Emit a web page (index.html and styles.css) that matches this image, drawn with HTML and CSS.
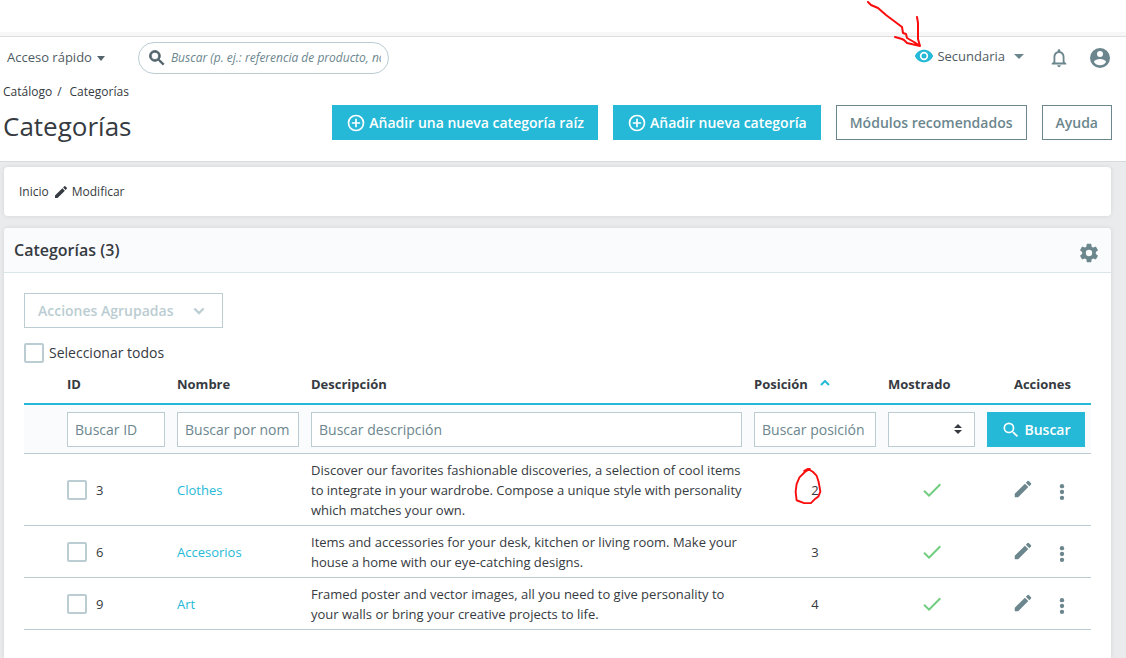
FILE: index.html
```html
<!DOCTYPE html>
<html lang="es">
<head>
<meta charset="utf-8">
<meta name="viewport" content="width=device-width, initial-scale=1">
<title>Categorías</title>
<link rel="stylesheet" href="styles.css">
</head>
<body>
<svg class="symbols" aria-hidden="true">
  <symbol id="i-search" viewBox="0 0 24 24"><path d="M15.5 14h-.79l-.28-.27A6.47 6.47 0 0 0 16 9.5 6.5 6.5 0 1 0 9.5 16c1.61 0 3.09-.59 4.23-1.57l.27.28v.79l5 4.99L20.49 19l-4.99-5zm-6 0a4.5 4.5 0 1 1 0-9 4.5 4.5 0 0 1 0 9z"/></symbol>
  <symbol id="i-add" viewBox="0 0 24 24"><path d="M13 7h-2v4H7v2h4v4h2v-4h4v-2h-4V7zm-1-5a10 10 0 1 0 0 20 10 10 0 0 0 0-20zm0 18a8 8 0 1 1 0-16 8 8 0 0 1 0 16z"/></symbol>
  <symbol id="i-edit" viewBox="0 0 24 24"><path d="M3 17.25V21h3.75L17.81 9.94l-3.75-3.75L3 17.25zM20.71 7.04a1 1 0 0 0 0-1.41l-2.34-2.34a1 1 0 0 0-1.41 0l-1.83 1.83 3.75 3.75 1.83-1.83z"/></symbol>
  <symbol id="i-check" viewBox="0 0 24 24"><path d="M9 16.17 4.83 12l-1.42 1.41L9 19 21 7l-1.41-1.41z"/></symbol>
  <symbol id="i-more" viewBox="0 0 24 24"><circle cx="12" cy="5" r="2.6"/><circle cx="12" cy="12" r="2.6"/><circle cx="12" cy="19" r="2.6"/></symbol>
  <symbol id="i-down" viewBox="0 0 24 24"><path d="M7.41 8.59 12 13.17l4.59-4.58L18 10l-6 6-6-6z"/></symbol>
</svg>

<div class="topstrip"></div>
<header class="header">
  <div class="bar">
    <button class="quick" type="button">Acceso rápido<span class="caret"></span></button>
    <form class="search">
      <svg class="search-icon" aria-hidden="true"><use href="#i-search"/></svg>
      <input class="search-input" type="text" aria-label="Buscar" placeholder="Buscar (p. ej.: referencia de producto, nombre de cliente)">
    </form>
    <div class="tools">
      <a class="shop" href="#">
        <svg class="eye" viewBox="0 0 24 24" aria-hidden="true"><path d="M12 4.500C7 4.500 2.730 7.610 1 12c1.730 4.390 6 7.500 11 7.500s9.270-3.110 11-7.500c-1.730-4.390-6-7.500-11-7.500zM12 17a5 5 0 1 1 0-10 5 5 0 0 1 0 10zm0-8a3 3 0 1 0 0 6 3 3 0 0 0 0-6z"/></svg>
        Secundaria<span class="caret caret-wide"></span>
        <svg class="arrow" viewBox="0 0 56 48" aria-hidden="true"><path d="M2 1l3 3 7 3 8 7 16 12 1 6 3 1 1 4 7 4 6 4M29 36l7 2 2 1 3 3 13 3M51 16l1 6v16l2 7"/></svg>
      </a>
      <button class="icon-btn" type="button" aria-label="Notificaciones"><svg class="bell" viewBox="0 0 24 24" aria-hidden="true"><path d="M12 22c1.100 0 2-.9 2-2h-4a2 2 0 0 0 2 2zm6-6v-5c0-3.070-1.630-5.640-4.500-6.320V4a1.500 1.500 0 0 0-3 0v.68C7.640 5.360 6 7.920 6 11v5l-2 2v1h16v-1l-2-2zm-2 1H8v-6c0-2.480 1.510-4.500 4-4.500s4 2.020 4 4.500v6z"/></svg></button>
      <button class="icon-btn" type="button" aria-label="Perfil"><svg class="avatar" viewBox="0 0 24 24" aria-hidden="true"><path d="M12 2a10 10 0 1 0 0 20 10 10 0 0 0 0-20zm0 3a3 3 0 1 1 0 6 3 3 0 0 1 0-6zm0 14.200a7.200 7.200 0 0 1-6-3.220c.03-1.990 4-3.080 6-3.080s5.970 1.090 6 3.080a7.200 7.200 0 0 1-6 3.220z"/></svg></button>
    </div>
  </div>
  <div class="heading">
    <div>
      <nav class="crumbs"><a href="#">Catálogo</a><span class="slash">/</span><a href="#">Categorías</a></nav>
      <h1 class="title">Categorías</h1>
    </div>
    <div class="actions">
      <button class="btn btn-primary" type="button"><svg class="btn-icon" aria-hidden="true"><use href="#i-add"/></svg>Añadir una nueva categoría raíz</button>
      <button class="btn btn-primary" type="button"><svg class="btn-icon" aria-hidden="true"><use href="#i-add"/></svg>Añadir nueva categoría</button>
      <button class="btn btn-outline" type="button">Módulos recomendados</button>
      <button class="btn btn-outline" type="button">Ayuda</button>
    </div>
  </div>
</header>

<main class="main">
  <section class="card path">
    <a href="#">Inicio</a>
    <a class="path-edit" href="#"><svg class="path-icon" aria-hidden="true"><use href="#i-edit"/></svg>Modificar</a>
  </section>

  <section class="card">
    <div class="card-head">
      <h2 class="card-title">Categorías (3)</h2>
      <button class="icon-btn" type="button" aria-label="Configuración"><svg class="gear" viewBox="0 0 24 24" aria-hidden="true"><path d="M19.430 12.980c.04-.32.07-.64.07-.98s-.03-.66-.07-.98l2.110-1.650a.5.5 0 0 0 .12-.64l-2-3.460a.5.5 0 0 0-.61-.22l-2.490 1a7.300 7.300 0 0 0-1.690-.98l-.38-2.650A.49.49 0 0 0 14 2h-4a.49.49 0 0 0-.49.42l-.38 2.650c-.61.25-1.170.59-1.690.98l-2.490-1a.5.5 0 0 0-.61.22l-2 3.460a.5.5 0 0 0 .12.64l2.110 1.650a7.900 7.900 0 0 0 0 1.960l-2.110 1.650a.5.5 0 0 0-.12.64l2 3.460c.12.22.39.3.61.22l2.490-1c.52.4 1.080.73 1.690.98l.38 2.650c.03.24.24.42.49.42h4c.25 0 .46-.18.49-.42l.38-2.650a7.700 7.700 0 0 0 1.690-.98l2.490 1c.23.09.49 0 .61-.22l2-3.460a.5.5 0 0 0-.12-.64zM12 15.500a3.500 3.500 0 1 1 0-7 3.500 3.500 0 0 1 0 7z"/></svg></button>
    </div>
    <div class="card-body">
      <button class="btn bulk" type="button" disabled>Acciones Agrupadas<svg class="bulk-icon" aria-hidden="true"><use href="#i-down"/></svg></button>
      <label class="select-all"><input class="check" type="checkbox">Seleccionar todos</label>
      <table class="grid">
        <colgroup><col class="c-blank"><col class="c-id"><col class="c-name"><col><col class="c-pos"><col class="c-shown"><col class="c-act"></colgroup>
        <thead>
          <tr class="labels">
            <td></td><th>ID</th><th>Nombre</th><th>Descripción</th>
            <th>Posición<svg class="sort" viewBox="0 0 10 6" aria-hidden="true"><path d="M1 5l4-4 4 4"/></svg></th>
            <th>Mostrado</th><th class="th-act">Acciones</th>
          </tr>
          <tr class="filters">
            <td></td>
            <td><input class="field" type="text" aria-label="ID" placeholder="Buscar ID"></td>
            <td><input class="field" type="text" aria-label="Nombre" placeholder="Buscar por nombre"></td>
            <td><input class="field" type="text" aria-label="Descripción" placeholder="Buscar descripción"></td>
            <td><input class="field" type="text" aria-label="Posición" placeholder="Buscar posición"></td>
            <td><div class="select-wrap"><select class="field" aria-label="Mostrado"><option></option><option>Sí</option><option>No</option></select><svg class="select-icon" viewBox="0 0 8 10" aria-hidden="true"><path d="M4 0l4 4H0zM4 10L0 6h8z"/></svg></div></td>
            <td><button class="btn btn-primary btn-search" type="button"><svg class="btn-icon" aria-hidden="true"><use href="#i-search"/></svg>Buscar</button></td>
          </tr>
        </thead>
        <tbody>
          <tr>
            <td></td>
            <td><label class="row-id"><input class="check" type="checkbox">3</label></td>
            <td><a class="link" href="#">Clothes</a></td>
            <td>Discover our favorites fashionable discoveries, a selection of cool items to integrate in your wardrobe. Compose a unique style with personality which matches your own.</td>
            <td class="mid"><span class="marked">2<svg class="ring" viewBox="0 0 30 40" aria-hidden="true"><path d="M11 4l4-2 5 3 4 4 2 6 1 5 1 6-2 5-4 3-4 4-7 0-8-3-1-9 1-8 3-7 6-6 5-3"/></svg></span></td>
            <td class="mid"><svg class="tick" role="img" aria-label="Sí"><use href="#i-check"/></svg></td>
            <td><div class="row-actions"><button class="icon-btn" type="button" aria-label="Editar"><svg class="pen"><use href="#i-edit"/></svg></button><button class="icon-btn" type="button" aria-label="Más"><svg class="more"><use href="#i-more"/></svg></button></div></td>
          </tr>
          <tr>
            <td></td>
            <td><label class="row-id"><input class="check" type="checkbox">6</label></td>
            <td><a class="link" href="#">Accesorios</a></td>
            <td>Items and accessories for your desk, kitchen or living room. Make your house a home with our eye-catching designs.</td>
            <td class="mid">3</td>
            <td class="mid"><svg class="tick" role="img" aria-label="Sí"><use href="#i-check"/></svg></td>
            <td><div class="row-actions"><button class="icon-btn" type="button" aria-label="Editar"><svg class="pen"><use href="#i-edit"/></svg></button><button class="icon-btn" type="button" aria-label="Más"><svg class="more"><use href="#i-more"/></svg></button></div></td>
          </tr>
          <tr>
            <td></td>
            <td><label class="row-id"><input class="check" type="checkbox">9</label></td>
            <td><a class="link" href="#">Art</a></td>
            <td>Framed poster and vector images, all you need to give personality to your walls or bring your creative projects to life.</td>
            <td class="mid">4</td>
            <td class="mid"><svg class="tick" role="img" aria-label="Sí"><use href="#i-check"/></svg></td>
            <td><div class="row-actions"><button class="icon-btn" type="button" aria-label="Editar"><svg class="pen"><use href="#i-edit"/></svg></button><button class="icon-btn" type="button" aria-label="Más"><svg class="more"><use href="#i-more"/></svg></button></div></td>
          </tr>
        </tbody>
      </table>
    </div>
  </section>
</main>
</body>
</html>
```

FILE: styles.css
```css
* { box-sizing: border-box; }

body {
  margin: 0;
  min-height: 100vh;
  display: flex;
  flex-direction: column;
  background: #eaebec;
  color: #363a41;
  font-family: "Open Sans", "Noto Sans", sans-serif;
  font-size: 13px;
  line-height: 20px;
}

a { color: inherit; text-decoration: none; }
button, input, select { font: inherit; color: inherit; }
button { cursor: pointer; }
svg { fill: currentColor; display: block; flex: none; }
.symbols { position: absolute; width: 0; height: 0; }

.topstrip {
  height: 37px;
  background: linear-gradient(#fff 32px, #f7f7f7 32px);
  border-bottom: 1px solid #dcdfdf;
}

/* Header */
.header { background: #fff; border-bottom: 1px solid #d5dbde; }

.bar {
  display: flex;
  align-items: center;
  min-height: 42px;
  padding: 0 14px 0 7px;
}

.quick {
  display: flex;
  align-items: center;
  padding: 0 0 2px;
  border: 0;
  background: none;
  color: #4f5b62;
}

.caret {
  margin: 2px 0 0 5px;
  border: 4px solid transparent;
  border-top: 5px solid #53646c;
  border-bottom: 0;
}
.caret-wide { margin-left: 9px; border-width: 5px 5px 0; border-top-color: #6c868e; }

.search {
  display: flex;
  align-items: center;
  width: 251px;
  height: 32px;
  margin-left: 33px;
  padding: 0 7px 0 8px;
  border: 1px solid #bbcdd2;
  border-radius: 16px;
}
.search-icon { width: 20px; height: 20px; color: #4f6169; stroke: currentColor; stroke-width: 1; }
.search-input {
  flex: 1;
  min-width: 0;
  margin-left: 4px;
  padding: 0;
  border: 0;
  outline: 0;
  background: none;
  font-size: 12px;
  font-style: italic;
}
.search-input::placeholder, .field::placeholder { color: #6c868e; opacity: 1; }

.tools { display: flex; align-items: center; margin-left: auto; }
.shop {
  position: relative;
  display: flex;
  align-items: center;
  margin-right: 24px;
  padding-bottom: 5px;
  color: #4f5b62;
}
.eye { width: 20px; height: 20px; margin-right: 3px; color: #25b9d7; }
.arrow {
  position: absolute;
  left: -48px;
  bottom: 22px;
  width: 56px;
  height: 48px;
}
.arrow path, .ring path { fill: none; stroke: #fb0d0d; stroke-width: 2; stroke-linejoin: round; stroke-linecap: round; }

.icon-btn { padding: 0; border: 0; background: none; color: #6c868e; }
.bell { width: 22px; height: 22px; }
.tools .icon-btn + .icon-btn { margin-left: 18px; }
.avatar { width: 24px; height: 24px; }

.heading { display: flex; justify-content: space-between; padding: 4px 14px 19px 3px; }
.crumbs { display: flex; font-size: 12px; line-height: 18px; }
.slash { margin: 0 8px 0 5px; }
.title { margin: 9px 0 0; font-size: 26px; font-weight: 400; line-height: 32px; }
.actions { display: flex; gap: 15px; padding-top: 22px; }

.btn {
  display: flex;
  align-items: center;
  justify-content: center;
  height: 35px;
  padding: 0 13px;
  border: 1px solid;
  background: #fff;
  font-size: 14px;
  font-weight: 600;
  white-space: nowrap;
}
.actions .btn { align-self: flex-start; }
.btn-primary { border-color: #25b9d7; background: #25b9d7; color: #fff; }
.btn-outline { border-color: #6c868e; color: #6c868e; }
.btn-icon { width: 20px; height: 20px; margin-right: 3px; }

/* Cards */
.main { flex: 1; display: flex; flex-direction: column; gap: 12px; padding: 5px 15px 0 4px; }
.card {
  background: #fff;
  border-radius: 4px;
  box-shadow: 0 0 4px rgba(108, 134, 142, 0.2);
}
.card:last-child { flex: 1; border-radius: 4px 4px 0 0; }

.path { display: flex; gap: 4px; padding: 15px 15px 14px; font-size: 12px; }
.path-edit { display: flex; align-items: center; gap: 3px; }
.path-icon { width: 16px; height: 16px; }

.card-head {
  display: flex;
  align-items: center;
  justify-content: space-between;
  height: 45px;
  padding: 0 12px 0 10px;
  border-bottom: 1px solid #dbe6e9;
  border-radius: 4px 4px 0 0;
  background: #fafbfc;
}
.card-title { margin: 0; font-size: 16px; font-weight: 600; }
.gear { width: 22px; height: 22px; margin: 6px -1px 0 0; }
.card-body { padding: 20px; }

.bulk { border-color: #bbcdd2; color: #bbcdd2; }
.bulk-icon { width: 20px; height: 20px; margin-left: 16px; stroke: currentColor; }

.check {
  appearance: none;
  flex: none;
  width: 20px;
  height: 20px;
  margin: 0;
  border: 2px solid #bbcdd2;
  border-radius: 2px;
  background: #fff;
}
.check:checked { background: #25b9d7; }
.select-all { display: flex; align-items: center; gap: 5px; margin-top: 15px; font-size: 14px; }

/* Category list */
.grid { width: 100%; margin-top: 2px; border-collapse: separate; border-spacing: 0; table-layout: fixed; }
.c-blank { width: 37px; }
.c-id { width: 110px; }
.c-name { width: 134px; }
.c-pos { width: 134px; }
.c-shown { width: 99px; }
.c-act { width: 110px; }

.grid td, .grid th { padding: 6px 6px 5px; border-bottom: 1px solid #bbcdd2; text-align: left; }
.grid .labels td, .grid .labels th { padding: 9px 6px; border-bottom: 2px solid #25b9d7; font-weight: 700; white-space: nowrap; }
.grid .labels .th-act { padding-right: 20px; text-align: right; }
.grid .filters td { padding: 7px 6px 6px; background: #fafbfc; }
.sort { display: inline-block; width: 10px; height: 6px; margin: 0 0 3px 12px; fill: none; stroke: #25b9d7; stroke-width: 2; }

.field {
  display: block;
  width: 100%;
  height: 35px;
  padding: 0 9px 0 7px;
  border: 1px solid #bbcdd2;
  border-radius: 0;
  outline: 0;
  background: #fff;
  font-size: 14px;
}
select.field { appearance: none; }
.select-wrap { position: relative; }
.select-icon { position: absolute; right: 13px; top: 12px; width: 8px; height: 10px; pointer-events: none; }
.btn-search { width: 100%; }

.row-id { display: flex; align-items: center; gap: 9px; }
.link { color: #25b9d7; }
.grid .mid { text-align: center; }
.marked { position: relative; }
.ring { position: absolute; left: -18px; top: -14px; width: 30px; height: 38px; }
.tick { width: 24px; height: 24px; margin: 0 auto; color: #70cd7f; }
.row-actions { display: flex; align-items: center; justify-content: space-between; padding: 0 13px 0 25px; }
.pen { width: 22px; height: 22px; margin-bottom: 2px; }
.more { width: 20px; height: 20px; margin-top: 4px; }
```
